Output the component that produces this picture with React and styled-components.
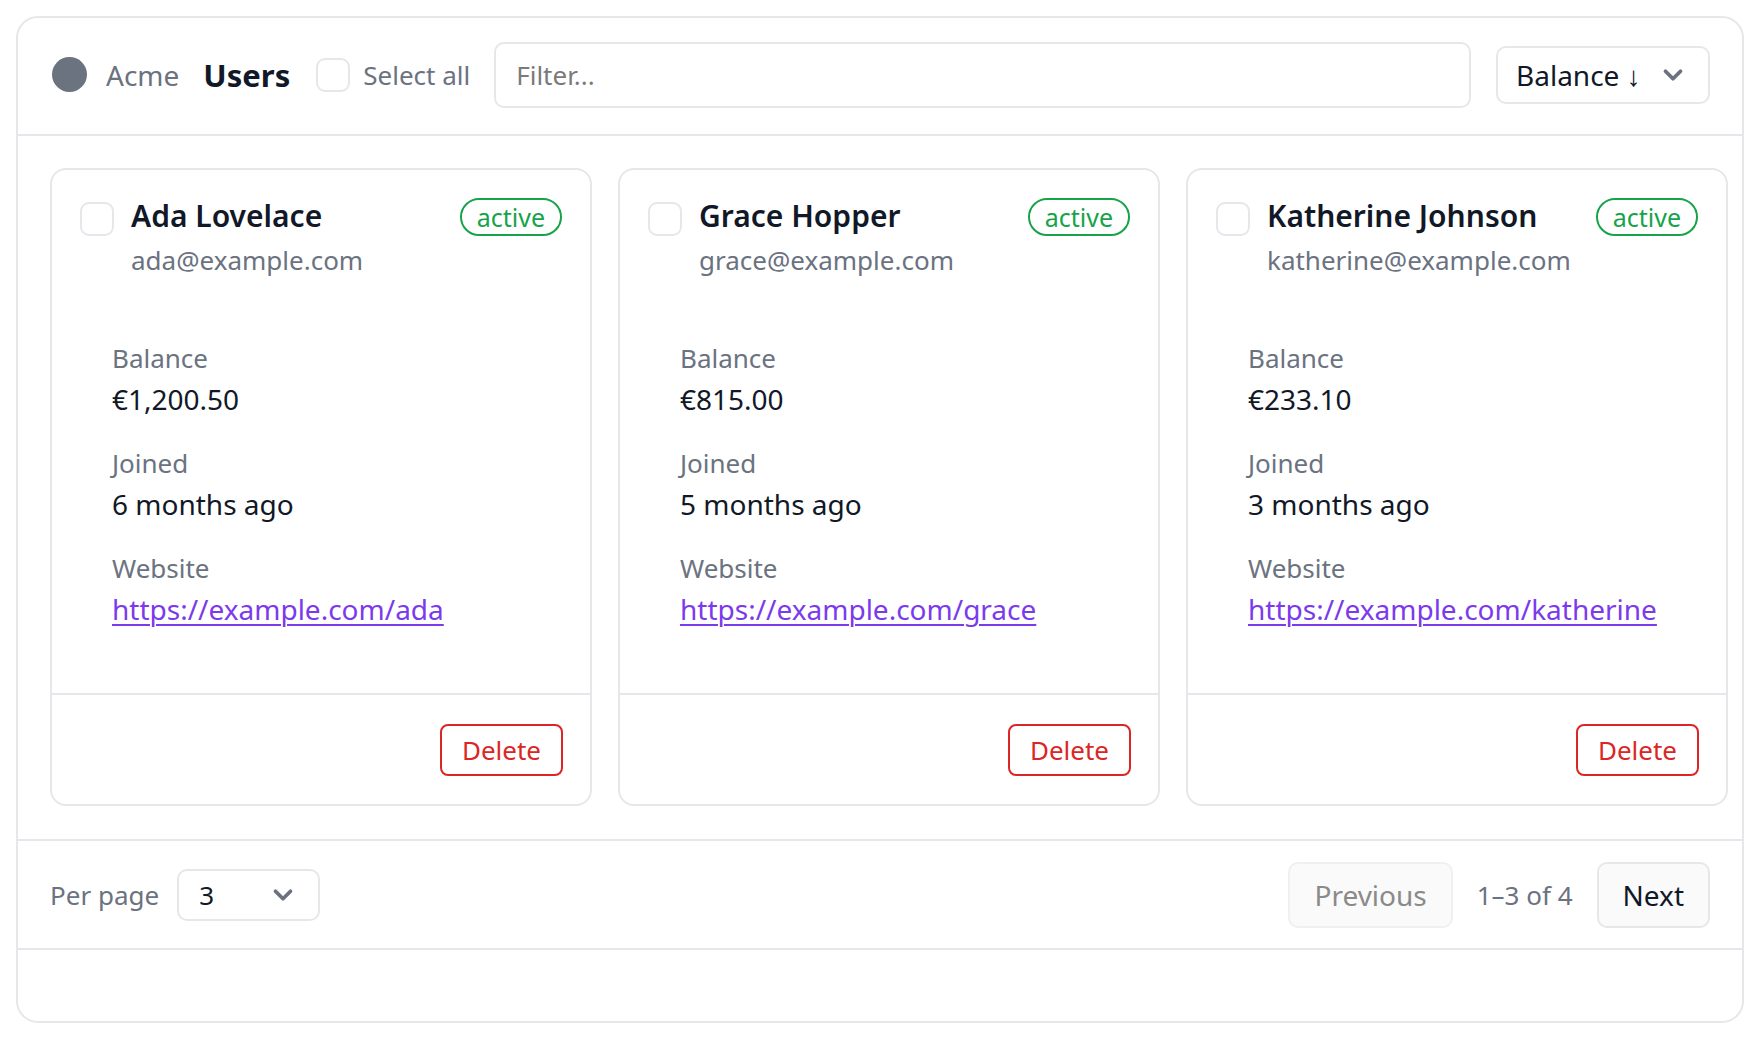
import React from 'react';
import styled, { createGlobalStyle } from 'styled-components';
import { ChevronDown } from 'lucide-react';

const GlobalStyle = createGlobalStyle`
	* { box-sizing: border-box; }
	body {
		margin: 0;
		padding: 16px;
		background: #ffffff;
		font-family: "Noto Sans", "Open Sans", sans-serif;
		color: #111827;
	}
`

const border = '#e5e7eb';
const muted = '#6b7280';

const Shell = styled.div`
	height: 1007px;
	border: 2px solid ${border};
	border-radius: 22px;
	display: flex;
	flex-direction: column;
	overflow: hidden;
`

const Toolbar = styled.header`
	height: 118px;
	flex: none;
	display: flex;
	align-items: center;
	padding: 0 32px 3px 34px;
	border-bottom: 2px solid ${border};
`

const Brand = styled.div`
	display: flex;
	align-items: center;
	gap: 19px;
	font-size: 28px;
	color: ${muted};
	margin-right: 24px;
`

const Logo = styled.span`
	width: 35px;
	height: 35px;
	border-radius: 50%;
	background: ${muted};
`

const Title = styled.h1`
	margin: 0 26px 0 0;
	font-size: 31px;
	font-weight: 700;
	color: #111827;
`

const Box = styled.span`
	width: ${p => p.size || 34}px;
	height: ${p => p.size || 34}px;
	flex: none;
	border: 2px solid ${border};
	border-radius: 9px;
	background: #fff;
	margin-top: ${p => p.offset || 0}px;
`

const CheckLabel = styled.label`
	display: flex;
	align-items: center;
	gap: 13px;
	font-size: 26px;
	color: ${muted};
	margin-right: 24px;
`

const Filter = styled.input`
	flex: 1;
	height: 66px;
	border: 2px solid ${border};
	border-radius: 10px;
	padding: 0 20px;
	font-family: inherit;
	font-size: 26px;
	color: #111827;
	outline: none;
	&::placeholder { color: #7a7a7a; }
`

const Select = styled.div`
	display: flex;
	align-items: center;
	justify-content: space-between;
	width: ${p => p.width}px;
	height: ${p => p.height}px;
	margin-left: ${p => p.gap || 0}px;
	padding: 0 ${p => p.padRight || 20}px 0 ${p => p.padLeft || 18}px;
	border: 2px solid ${border};
	border-radius: 10px;
	font-size: ${p => p.fontSize || 28}px;
	color: #111827;
	flex: none;
	svg { color: ${muted}; }
`

const CardArea = styled.section`
	flex: none;
	display: grid;
	grid-template-columns: repeat(3, 542px);
	gap: 26px;
	padding: 32px 33px 33px 32px;
`

const Card = styled.article`
	border: 2px solid ${border};
	border-radius: 16px;
	display: flex;
	flex-direction: column;
	height: 638px;
`

const CardBody = styled.div`
	flex: 1;
	padding: 28px 28px 0 28px;
`

const CardHead = styled.div`
	display: flex;
	align-items: flex-start;
	gap: 17px;
`

const Who = styled.div`
	flex: 1;
	display: flex;
	flex-direction: column;
	gap: 8px;
`

const Name = styled.div`
	font-size: 30px;
	font-weight: 600;
	line-height: 36px;
	color: #111827;
`

const Email = styled.div`
	font-size: 26px;
	line-height: 36px;
	color: ${muted};
`

const Badge = styled.span`
	height: 38px;
	padding: 0 15px;
	display: flex;
	align-items: center;
	border: 2px solid #16a34a;
	border-radius: 999px;
	color: #16a34a;
	font-size: 25px;
`

const Details = styled.dl`
	margin: 61px 0 0 0;
	padding-left: 32px;
	display: flex;
	flex-direction: column;
	gap: 23px;
`

const Field = styled.div``

const Label = styled.dt`
	font-size: 26px;
	line-height: 38px;
	color: ${muted};
`

const Value = styled.dd`
	margin: 0;
	font-size: 28px;
	line-height: 44px;
	color: #111827;
`

const Link = styled.a`
	color: #7c3aed;
	text-decoration: underline;
	text-underline-offset: 4px;
	text-decoration-thickness: 2px;
`

const CardFoot = styled.div`
	height: 111px;
	border-top: 2px solid ${border};
	display: flex;
	align-items: center;
	justify-content: flex-end;
	padding: 0 27px;
`

const DangerButton = styled.button`
	height: 52px;
	padding: 0 20px;
	border: 2px solid #dc2626;
	border-radius: 8px;
	background: #fff;
	color: #dc2626;
	font-family: inherit;
	font-size: 26px;
`

const Pager = styled.footer`
	height: 111px;
	flex: none;
	display: flex;
	align-items: center;
	padding: 0 32px 0 32px;
	border-top: 2px solid ${border};
	border-bottom: 2px solid ${border};
`

const Muted = styled.span`
	font-size: 26px;
	color: ${muted};
`

const Spacer = styled.div`
	flex: 1;
`

const PageButton = styled.button`
	height: 66px;
	padding: 0 24px;
	border: 2px solid ${p => p.disabled ? '#f0f0f2' : border};
	border-radius: 10px;
	background: #fafafa;
	color: ${p => p.disabled ? '#8a8a8a' : '#111827'};
	font-family: inherit;
	font-size: 28px;
`

const PagerNav = styled.div`
	display: flex;
	align-items: center;
	gap: 24px;
`

const users = [
	{ name: 'Ada Lovelace', email: 'ada@example.com', balance: '€1,200.50', joined: '6 months ago', site: 'https://example.com/ada' },
	{ name: 'Grace Hopper', email: 'grace@example.com', balance: '€815.00', joined: '5 months ago', site: 'https://example.com/grace' },
	{ name: 'Katherine Johnson', email: 'katherine@example.com', balance: '€233.10', joined: '3 months ago', site: 'https://example.com/katherine' },
]

function UserCard({ user }) {
	return (
		<Card>
			<CardBody>
				<CardHead>
					<Box offset={4} />
					<Who>
						<Name>{user.name}</Name>
						<Email>{user.email}</Email>
					</Who>
					<Badge>active</Badge>
				</CardHead>
				<Details>
					<Field>
						<Label>Balance</Label>
						<Value>{user.balance}</Value>
					</Field>
					<Field>
						<Label>Joined</Label>
						<Value>{user.joined}</Value>
					</Field>
					<Field>
						<Label>Website</Label>
						<Value><Link href="#">{user.site}</Link></Value>
					</Field>
				</Details>
			</CardBody>
			<CardFoot>
				<DangerButton>Delete</DangerButton>
			</CardFoot>
		</Card>
	)
}

export default function App() {
	return (
		<>
			<GlobalStyle />
			<Shell>
				<Toolbar>
					<Brand>
						<Logo />
						Acme
					</Brand>
					<Title>Users</Title>
					<CheckLabel>
						<Box />
						Select all
					</CheckLabel>
					<Filter placeholder="Filter..." />
					<Select width={214} height={58} gap={25} padRight={20}>
						<span>Balance ↓</span>
						<ChevronDown size={30} strokeWidth={3} />
					</Select>
				</Toolbar>
				<CardArea>
					{users.map(u => <UserCard key={u.email} user={u} />)}
				</CardArea>
				<Pager>
					<Muted>Per page</Muted>
					<Select width={143} height={52} gap={18} fontSize={26} padLeft={20} padRight={20}>
						<span>3</span>
						<ChevronDown size={30} strokeWidth={3} />
					</Select>
					<Spacer />
					<PagerNav>
						<PageButton disabled>Previous</PageButton>
						<Muted>1–3 of 4</Muted>
						<PageButton>Next</PageButton>
					</PagerNav>
				</Pager>
			</Shell>
		</>
	)
}
